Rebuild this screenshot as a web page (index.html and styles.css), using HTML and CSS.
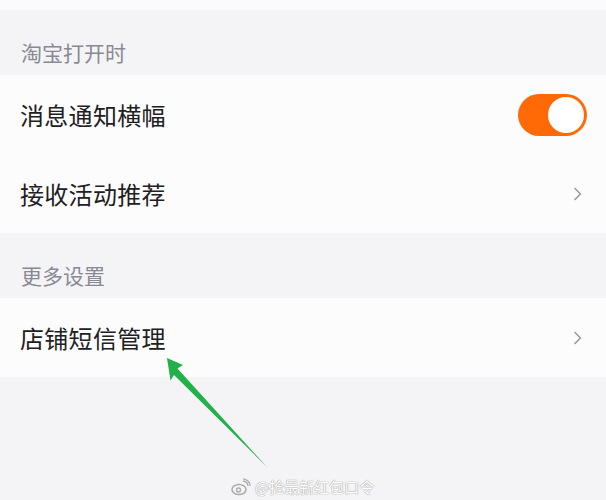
FILE: index.html
```html
<!DOCTYPE html>
<html lang="zh-CN">
<head>
    <meta charset="UTF-8">
    <meta name="viewport" content="width=device-width, initial-scale=1.0">
    <title>消息设置</title>
    <link rel="stylesheet" href="styles.css">
</head>
<body>

    <div class="page">
        <div class="top-strip"></div>

        <!-- 淘宝打开时 -->
        <div class="group-title">淘宝打开时</div>
        <div class="group">
            <div class="row">
                <span class="row-label">消息通知横幅</span>
                <span class="switch on"><span class="knob"></span></span>
            </div>
            <div class="row">
                <span class="row-label">接收活动推荐</span>
                <svg class="chevron" width="10" height="14" viewBox="0 0 10 14"><path d="M2 1.5 L7.5 7 L2 12.5" fill="none" stroke="#9a9a9e" stroke-width="1.6" stroke-linecap="round" stroke-linejoin="round"/></svg>
            </div>
        </div>

        <!-- 更多设置 -->
        <div class="group-title">更多设置</div>
        <div class="group">
            <div class="row">
                <span class="row-label">店铺短信管理</span>
                <svg class="chevron" width="10" height="14" viewBox="0 0 10 14"><path d="M2 1.5 L7.5 7 L2 12.5" fill="none" stroke="#9a9a9e" stroke-width="1.6" stroke-linecap="round" stroke-linejoin="round"/></svg>
            </div>
        </div>

        <!-- 指示箭头 -->
        <svg class="pointer" width="120" height="120" viewBox="0 0 120 120">
            <path d="M2 3 L18 10 L12.5 13.5 L102 112 L9 20 L5.5 25.5 Z" fill="#22b04a"/>
        </svg>

        <div class="watermark">
            <svg width="20" height="18" viewBox="0 0 20 18">
                <ellipse cx="8" cy="11.5" rx="7" ry="5" fill="none" stroke="#aaa" stroke-width="1.5"/>
                <circle cx="7.5" cy="12" r="2" fill="none" stroke="#aaa" stroke-width="1.3"/>
                <path d="M12 3 A5 5 0 0 1 17 8" fill="none" stroke="#aaa" stroke-width="1.4"/>
                <path d="M12 0.8 A7.5 7.5 0 0 1 19.2 8" fill="none" stroke="#aaa" stroke-width="1.2"/>
            </svg>
            <span>@抢最新红包口令</span>
        </div>
    </div>

</body>
</html>
```

FILE: styles.css
```css
body {
    margin: 0;
    background: #f4f4f6;
    font-family: "Noto Sans CJK SC", "Noto Sans", sans-serif;
}
.page {
    position: relative;
    width: 606px;
    height: 500px;
    overflow: hidden;
}
.top-strip {
    height: 10px;
    background: #fbfbfc;
}
.group-title {
    height: 65px;
    box-sizing: border-box;
    padding: 28px 0 0 21px;
    font-size: 21px;
    line-height: 28px;
    color: #878a94;
}
.group {
    background: #fcfcfd;
}
.row {
    display: flex;
    align-items: center;
    justify-content: space-between;
    height: 79px;
    padding: 0 20px 0 20px;
}
.row-label {
    font-size: 24px;
    color: #202022;
    letter-spacing: 0.3px;
}
.switch {
    width: 69px;
    height: 42px;
    border-radius: 21px;
    background: #ff6a07;
    display: flex;
    align-items: center;
    justify-content: flex-end;
    padding: 0 3px;
    box-sizing: border-box;
    margin-right: -1px;
}
.knob {
    width: 36px;
    height: 36px;
    border-radius: 50%;
    background: #fff;
}
.chevron {
    margin-right: 3px;
}
.pointer {
    position: absolute;
    left: 165px;
    top: 355px;
}
.watermark {
    position: absolute;
    left: 231px;
    top: 476px;
    display: flex;
    align-items: center;
    gap: 4px;
    font-size: 15px;
    color: #fff;
    text-shadow: 0 0 1px #999, 0 0 1px #999;
}
```
